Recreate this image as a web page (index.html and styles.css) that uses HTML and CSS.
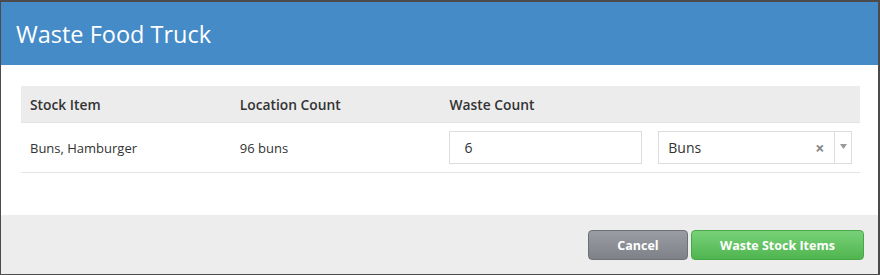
FILE: index.html
```html
<!DOCTYPE html>
<html lang="en">
<head>
    <meta charset="UTF-8">
    <title>Waste Food Truck</title>
    <link rel="stylesheet" href="styles.css">
</head>
<body>
    <div class="modal">
        <div class="modal-header">
            <h2>Waste Food Truck</h2>
        </div>
        <div class="modal-body">
            <table class="stock-table">
                <thead>
                    <tr>
                        <th>Stock Item</th>
                        <th>Location Count</th>
                        <th>Waste Count</th>
                        <th></th>
                    </tr>
                </thead>
                <tbody>
                    <tr>
                        <td>Buns, Hamburger</td>
                        <td>96 buns</td>
                        <td><input type="text" class="count-input" value="6"></td>
                        <td>
                            <div class="unit-select">
                                <span class="unit-value">Buns</span>
                                <span class="unit-clear">&times;</span>
                                <span class="unit-arrow">
                                    <svg width="7" height="5" viewBox="0 0 7 5"><path d="M0 0h7L3.5 5z" fill="#999"/></svg>
                                </span>
                            </div>
                        </td>
                    </tr>
                </tbody>
            </table>
        </div>
        <div class="modal-footer">
            <button class="btn btn-cancel">Cancel</button>
            <button class="btn btn-waste">Waste Stock Items</button>
        </div>
    </div>
</body>
</html>
```

FILE: styles.css
```css
body {
    margin: 0;
    background: #4b4b4b;
    font-family: "Open Sans", Arial, sans-serif;
    color: #333;
}
.modal {
    margin: 2px 0 0 1px;
    width: 877px;
    height: 272px;
    background: #fff;
    display: flex;
    flex-direction: column;
}
.modal-header {
    background: #448bc8;
    height: 63px;
    display: flex;
    align-items: center;
    padding-left: 15px;
}
.modal-header h2 {
    margin: 0;
    color: #fff;
    font-size: 23.5px;
    font-weight: 400;
}
.modal-body {
    padding: 21px 18px 0 20px;
    height: 129px;
}
.stock-table {
    width: 100%;
    border-collapse: collapse;
    table-layout: fixed;
    font-size: 13px;
}
.stock-table th {
    background: #ececec;
    text-align: left;
    font-size: 13.8px;
    font-weight: 600;
    height: 36px;
    padding: 0 8px 0 9px;
    border-bottom: 1px solid #e2e2e2;
}
.stock-table td {
    height: 49px;
    padding: 0 8px 0 9px;
    border-bottom: 1px solid #e2e2e2;
}
.stock-table td:nth-child(3),
.stock-table td:nth-child(4) {
    padding-left: 8px;
}
.count-input {
    box-sizing: border-box;
    width: 100%;
    height: 33px;
    border: 1px solid #ddd;
    padding: 0 15px;
    font-family: inherit;
    font-size: 14px;
    color: #333;
}
.unit-select {
    height: 33px;
    box-sizing: border-box;
    width: 194px;
    border: 1px solid #ddd;
    display: flex;
    align-items: center;
    font-size: 14px;
}
.unit-value {
    flex: 1;
    padding-left: 9px;
}
.unit-clear {
    color: #888;
    font-size: 16px;
    font-weight: 700;
    width: 14px;
    margin-right: 5px;
}
.unit-arrow {
    border-left: 1px solid #ddd;
    height: 100%;
    width: 17px;
    display: flex;
    justify-content: center;
    align-items: center;
    padding-bottom: 3px;
    box-sizing: border-box;
}
.modal-footer {
    flex: 1;
    background: #ededed;
    display: flex;
    justify-content: flex-end;
    align-items: flex-start;
    padding: 15px 14px 0 0;
    gap: 3px;
}
.btn {
    height: 30px;
    border-radius: 4px;
    color: #fff;
    font-family: inherit;
    font-size: 12.5px;
    font-weight: 700;
    cursor: pointer;
}
.btn-cancel {
    width: 100px;
    background: linear-gradient(#9a9da3, #7e8187);
    border: 1px solid #6d7076;
}
.btn-waste {
    width: 173px;
    background: linear-gradient(#78d178, #4fb54f);
    border: 1px solid #48a848;
}
```
